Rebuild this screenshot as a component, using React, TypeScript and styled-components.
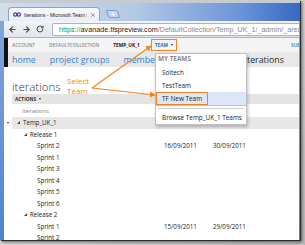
import React from 'react'
import styled, { createGlobalStyle } from 'styled-components'
import { ArrowLeft, ArrowRight, RotateCw, Lock, X } from 'lucide-react'

const GlobalStyle = createGlobalStyle`
    html, body {
        margin: 0;
        padding: 0;
    }

    body {
        width: 305px;
        height: 245px;
        overflow: hidden;
        font-family: 'Open Sans', 'Liberation Sans', sans-serif;
    }

    * {
        box-sizing: border-box;
    }
`

const orange = '#f58220'

const Stage = styled.div`
    width: 305px;
    height: 245px;
    background: linear-gradient(135deg, #ececec, #b9b9b9);
`

const Window = styled.div`
    position: relative;
    width: 300px;
    height: 240px;
    display: flex;
    flex-direction: column;
    overflow: hidden;
    background: linear-gradient(to bottom, #86a9dc, #5282cf);
    box-shadow: 1px 1px 0 #2c2c2c, 2px 2px 3px rgba(0, 0, 0, 0.55);
`

const TitleBar = styled.div`
    height: 21px;
    flex-shrink: 0;
    display: flex;
    align-items: flex-end;
    border-top: 3px solid #c6cad1;
    background: linear-gradient(to right, #d3deec 0%, #b3c8e6 45%, #6c94d8 80%, #3767c4 100%);
`

const Tab = styled.div`
    width: 92px;
    height: 14px;
    margin-left: 8px;
    display: flex;
    align-items: center;
    gap: 3px;
    padding: 0 3px 0 4px;
    border: 1px solid #8ea3c2;
    border-bottom: none;
    border-radius: 4px 4px 0 0;
    background: linear-gradient(to bottom, #f7f9fc, #e9eef5);
    color: #222;
    font-family: 'Liberation Sans', Arial, sans-serif;
    font-size: 5.2px;
    white-space: nowrap;
`

const TabTitle = styled.span`
    flex: 1;
    overflow: hidden;
`

const NewTab = styled.div`
    width: 12px;
    height: 8px;
    margin: 0 0 3px 7px;
    border: 1px solid #7f9cc6;
    border-radius: 2px;
    background: #c3d4ec;
    transform: skewX(20deg);
    display: flex;
    align-items: center;
    justify-content: center;
    color: #fff;
    font-size: 8px;
    line-height: 1;
    font-weight: 700;
`

const Body = styled.div`
    flex: 1;
    display: flex;
    flex-direction: column;
    margin: 0 1px 0 4px;
    min-height: 0;
`

const Toolbar = styled.div`
    height: 17px;
    flex-shrink: 0;
    display: flex;
    align-items: center;
    padding-left: 3px;
    gap: 4px;
    background: linear-gradient(to bottom, #f1f4f8, #dfe6ef);
    border-bottom: 1px solid #a9b5c6;
    color: #4d4d4d;
`

const ToolButton = styled.span`
    width: 10px;
    display: flex;
    align-items: center;
    justify-content: center;
`

const UrlField = styled.div`
    flex: 1;
    height: 13px;
    margin-left: 3px;
    display: flex;
    align-items: center;
    gap: 2px;
    padding-left: 4px;
    border: 1px solid #a7b4c6;
    border-right: none;
    border-radius: 2px 0 0 2px;
    background: #fff;
    font-family: 'Liberation Sans', Arial, sans-serif;
    font-size: 7.2px;
    white-space: nowrap;
    overflow: hidden;
`

const UrlPart = styled.span<{ $tone: 'scheme' | 'host' | 'path' }>`
    color: ${({ $tone }) => ($tone === 'scheme' ? '#1f9a2f' : $tone === 'host' ? '#1a1a1a' : '#8a8a8a')};
`

const Page = styled.div`
    flex: 1;
    display: flex;
    flex-direction: column;
    background: #fff;
    min-height: 0;
`

const TopNav = styled.div`
    height: 14px;
    flex-shrink: 0;
    display: flex;
    align-items: center;
    gap: 14px;
    padding-left: 4px;
    border-left: 4px solid #111;
    background: #f4f4f4;
    white-space: nowrap;
`

const TopNavItem = styled.span<{ $variant?: 'muted' | 'current' }>`
    font-size: 4.8px;
    text-transform: uppercase;
    font-weight: ${({ $variant }) => ($variant === 'current' ? 700 : 600)};
    color: ${({ $variant }) => ($variant === 'current' ? '#222' : '#8c8c8c')};
`

const TeamPicker = styled.span`
    display: flex;
    align-items: center;
    gap: 3px;
    height: 12px;
    margin-left: -3px;
    padding: 0 3px;
    border: 1.5px solid ${orange};
    font-size: 4.8px;
    font-weight: 700;
    color: #2a6fd0;
`

const Caret = styled.span`
    width: 0;
    height: 0;
    border-style: solid;
    border-width: 2px 1.5px 0 1.5px;
    border-color: #333 transparent transparent transparent;
`

const SubLink = styled.span`
    margin-left: auto;
    width: 8px;
    overflow: hidden;
    font-size: 4.8px;
    font-weight: 600;
    color: #2a6fd0;
`

const HubNav = styled.div`
    height: 15px;
    flex-shrink: 0;
    display: flex;
    align-items: center;
    gap: 14px;
    padding-left: 4px;
    border-left: 4px solid #111;
    background: #e8e8e8;
    white-space: nowrap;
`

const HubLink = styled.span<{ $active?: boolean; $offset?: number }>`
    font-size: 8.8px;
    color: ${({ $active }) => ($active ? '#2b2b2b' : '#3b7fd4')};
    margin-left: ${({ $offset }) => $offset ?? 0}px;
`

const Content = styled.div`
    padding-left: 8px;
    display: flex;
    flex-direction: column;
`

const Heading = styled.h1`
    margin: 12px 0 0;
    height: 15px;
    font-size: 11.5px;
    line-height: 15px;
    font-weight: 300;
    color: #333;
`

const ActionsBar = styled.div`
    height: 10px;
    display: flex;
    align-items: center;
    gap: 3px;
    padding-left: 3px;
    background: #e4e4e4;
    font-size: 4.8px;
    font-weight: 700;
    color: #333;
`

const ColumnHeader = styled.div`
    margin-top: 2px;
    height: 11px;
    padding-left: 10px;
    font-size: 6px;
    line-height: 11px;
    color: #808080;
`

const Tree = styled.div`
    display: flex;
    flex-direction: column;
`

const Row = styled.div`
    height: 11.5px;
    display: flex;
    align-items: center;
    font-size: 6.2px;
    color: #222;
    white-space: nowrap;
`

const RowCaret = styled.span`
    width: 8px;
    height: 100%;
    display: flex;
    align-items: center;
    justify-content: center;
`

const RowBody = styled.div<{ $selected?: boolean }>`
    flex: 1;
    height: 100%;
    display: grid;
    grid-template-columns: 152px 49px 1fr;
    align-items: center;
    background: ${({ $selected }) => ($selected ? '#e7e7e7' : 'transparent')};
`

const NameCell = styled.span<{ $depth: number }>`
    display: flex;
    align-items: center;
    padding-left: ${({ $depth }) => 5 + $depth * 7}px;
`

const Toggle = styled.span<{ $open?: boolean }>`
    width: 6px;
    display: flex;
    align-items: center;

    &::before {
        content: '';
        display: ${({ $open }) => ($open ? 'block' : 'none')};
        width: 0;
        height: 0;
        border-style: solid;
        border-width: 0 0 3px 3px;
        border-color: transparent transparent #444 transparent;
    }
`

const Menu = styled.div`
    position: absolute;
    left: 155px;
    top: 53px;
    width: 92px;
    display: flex;
    flex-direction: column;
    background: #fff;
    border: 1px solid #c2c2c2;
    box-shadow: 1px 2px 3px rgba(0, 0, 0, 0.25);
    white-space: nowrap;
`

const MenuHeader = styled.div`
    height: 11.5px;
    padding-left: 2px;
    line-height: 10px;
    font-size: 6.4px;
    font-weight: 700;
    color: #8a8a8a;
    text-transform: uppercase;
`

const MenuItem = styled.div<{ $selected?: boolean }>`
    height: ${({ $selected }) => ($selected ? 14 : 13)}px;
    display: flex;
    align-items: center;
    padding-left: ${({ $selected }) => ($selected ? 0 : 6)}px;
    font-size: 6.4px;
    color: #222;
    background: ${({ $selected }) => ($selected ? '#dbe7f8' : 'transparent')};
    border-bottom: ${({ $selected }) => ($selected ? '1px solid #a9c6ec' : 'none')};
`

const Highlight = styled.span`
    height: 100%;
    display: flex;
    align-items: center;
    padding: 0 5px;
    border: 1.5px solid ${orange};
`

const MenuSeparator = styled.div`
    height: 1px;
    margin: 2px 2px;
    background: #d0d0d0;
`

const Callout = styled.div`
    position: absolute;
    left: 67px;
    top: 76px;
    font-size: 8px;
    line-height: 10px;
    color: ${orange};
`

const Arrows = styled.svg`
    position: absolute;
    left: 0;
    top: 0;
    pointer-events: none;
`

const rows = [
    { name: 'Temp_UK_1', depth: 0, open: true, root: true },
    { name: 'Release 1', depth: 1, open: true },
    { name: 'Sprint 2', depth: 2, start: '16/09/2011', end: '30/09/2011' },
    { name: 'Sprint 1', depth: 2 },
    { name: 'Sprint 3', depth: 2 },
    { name: 'Sprint 4', depth: 2 },
    { name: 'Sprint 5', depth: 2 },
    { name: 'Sprint 6', depth: 2 },
    { name: 'Release 2', depth: 1, open: true },
    { name: 'Sprint 1', depth: 2, start: '15/09/2011', end: '29/09/2011' },
    { name: 'Sprint 2', depth: 2 },
]

const TfsIcon = () => (
    <svg width="8" height="5" viewBox="0 0 8 5">
        <ellipse cx="2.2" cy="2.5" rx="1.6" ry="1.6" fill="none" stroke="#55379a" strokeWidth="1.2" />
        <ellipse cx="5.8" cy="2.5" rx="1.6" ry="1.6" fill="none" stroke="#55379a" strokeWidth="1.2" />
    </svg>
)

export default function App() {
    return (
        <>
            <GlobalStyle />
            <Stage>
                <Window>
                    <TitleBar>
                        <Tab>
                            <TfsIcon />
                            <TabTitle>Iterations - Microsoft Team Fo</TabTitle>
                            <X size={6} strokeWidth={2.5} color="#666" />
                        </Tab>
                        <NewTab>+</NewTab>
                    </TitleBar>
                    <Body>
                        <Toolbar>
                            <ToolButton>
                                <ArrowLeft size={9} strokeWidth={3.2} />
                            </ToolButton>
                            <ToolButton>
                                <ArrowRight size={9} strokeWidth={3.2} />
                            </ToolButton>
                            <ToolButton>
                                <RotateCw size={8} strokeWidth={3} />
                            </ToolButton>
                            <UrlField>
                                <Lock size={7} strokeWidth={3} color="#3d9a3d" />
                                <span>
                                    <UrlPart $tone="scheme">https://</UrlPart>
                                    <UrlPart $tone="host">avanade.tfspreview.com</UrlPart>
                                    <UrlPart $tone="path">/DefaultCollection/Temp_UK_1/_admin/_areaiterations</UrlPart>
                                </span>
                            </UrlField>
                        </Toolbar>
                        <Page>
                            <TopNav>
                                <TopNavItem $variant="muted">Account</TopNavItem>
                                <TopNavItem $variant="muted">DefaultCollection</TopNavItem>
                                <TopNavItem $variant="current">Temp_UK_1</TopNavItem>
                                <TeamPicker>
                                    TEAM
                                    <Caret />
                                </TeamPicker>
                                <SubLink>SUBSCRIPTIONS</SubLink>
                            </TopNav>
                            <HubNav>
                                <HubLink>home</HubLink>
                                <HubLink>project groups</HubLink>
                                <HubLink>members</HubLink>
                                <HubLink $active $offset={68}>
                                    iterations
                                </HubLink>
                            </HubNav>
                            <Content>
                                <Heading>iterations</Heading>
                                <ActionsBar>
                                    ACTIONS
                                    <Caret />
                                </ActionsBar>
                                <ColumnHeader>Iterations</ColumnHeader>
                            </Content>
                            <Tree>
                                {rows.map((row, index) => (
                                    <Row key={index}>
                                        <RowCaret>{row.root && <Caret />}</RowCaret>
                                        <RowBody $selected={row.root}>
                                            <NameCell $depth={row.depth}>
                                                <Toggle $open={row.open} />
                                                {row.name}
                                            </NameCell>
                                            <span>{row.start}</span>
                                            <span>{row.end}</span>
                                        </RowBody>
                                    </Row>
                                ))}
                            </Tree>
                        </Page>
                    </Body>
                    <Menu>
                        <MenuHeader>My Teams</MenuHeader>
                        <MenuItem>Soltech</MenuItem>
                        <MenuItem>TestTeam</MenuItem>
                        <MenuItem $selected>
                            <Highlight>TF New Team</Highlight>
                        </MenuItem>
                        <MenuSeparator />
                        <MenuItem>Browse Temp_UK_1 Teams</MenuItem>
                    </Menu>
                    <Callout>
                        Select
                        <br />
                        Team
                    </Callout>
                    <Arrows width="300" height="240" viewBox="0 0 300 240">
                        <defs>
                            <marker id="head" markerWidth="6" markerHeight="6" refX="5" refY="3" orient="auto" markerUnits="userSpaceOnUse">
                                <path d="M0,0 L6,3 L0,6 Z" fill={orange} />
                            </marker>
                        </defs>
                        <line x1="92" y1="88" x2="151" y2="46" stroke={orange} strokeWidth="1.2" markerEnd="url(#head)" />
                        <line x1="92" y1="88" x2="155" y2="95" stroke={orange} strokeWidth="1.2" markerEnd="url(#head)" />
                    </Arrows>
                </Window>
            </Stage>
        </>
    )
}
